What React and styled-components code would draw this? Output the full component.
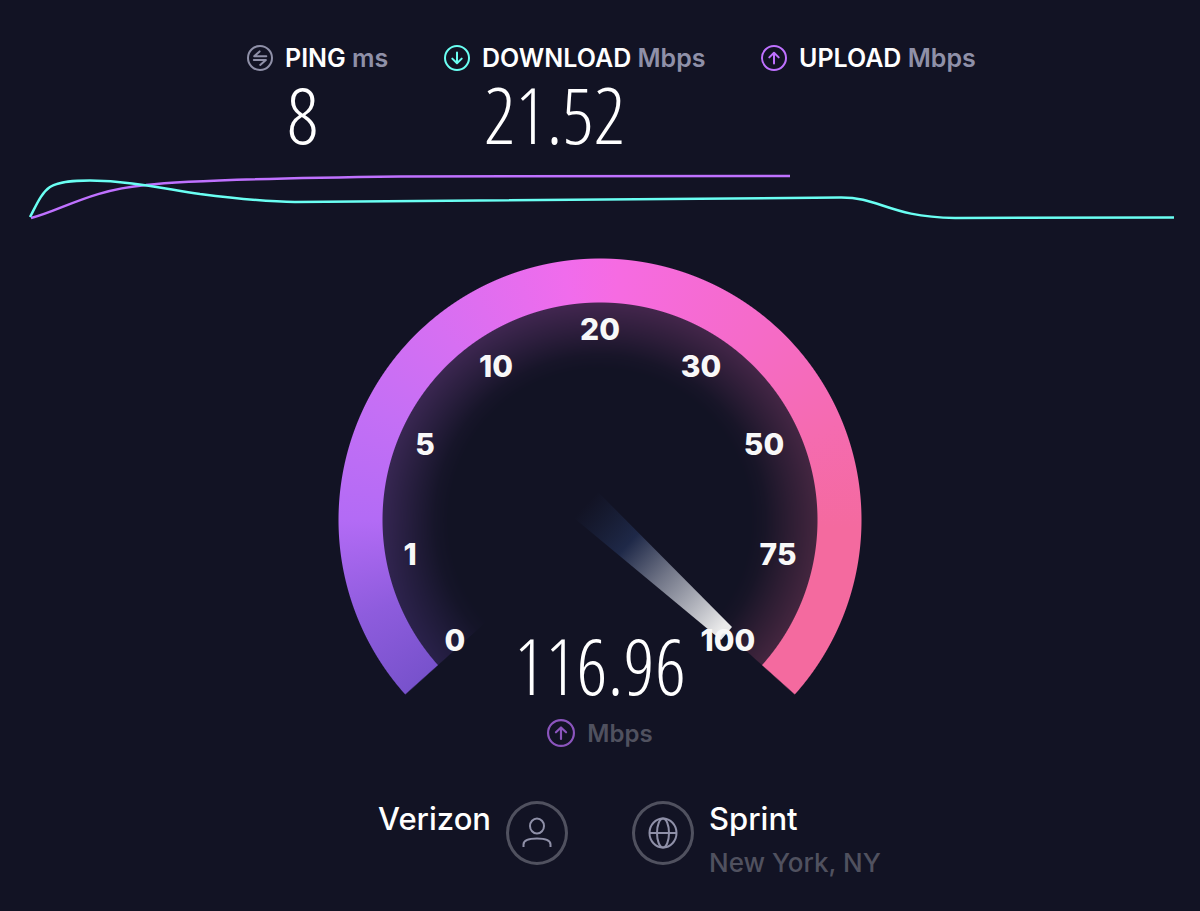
import React from "react";
import styled, { createGlobalStyle } from "styled-components";

const colors = {
  page: "#121324",
  text: "#ffffff",
  muted: "#8f90a8",
  dim: "#50515f",
  cyan: "#6afff3",
  purple: "#bf71ff",
};

const GlobalStyle = createGlobalStyle`
  body {
    margin: 0;
    background: ${colors.page};
    color: ${colors.text};
    font-family: Inter, "Liberation Sans", sans-serif;
  }
`;

const Page = styled.main`
  display: flex;
  flex-direction: column;
  min-height: 100vh;
  box-sizing: border-box;
  padding-top: 40px;
`;

const Results = styled.dl`
  display: grid;
  grid-template-columns: 197px 317px 212px;
  justify-content: center;
  margin: 0;
  padding-left: 20px;
`;

const Result = styled.div`
  display: flex;
  flex-direction: column;
`;

const ResultLabel = styled.dt`
  display: flex;
  align-items: center;
  gap: 12px;
  height: 36px;
  font-size: 25px;
  line-height: 36px;
  font-weight: 600;
  white-space: nowrap;
`;

const Unit = styled.span`
  color: ${colors.muted};
`;

const BigNumber = styled.span`
  font-family: "Open Sans Condensed Light", "Open Sans Cond Light", "Roboto Condensed Light", "Roboto Condensed", Roboto, sans-serif;
  font-size: 78px;
  line-height: 76px;
  font-weight: 300;
`;

const ResultValue = styled.dd`
  height: 76px;
  margin: 0;
  padding-left: 40px;
`;

const Chart = styled.svg`
  display: block;
  width: 100%;
  margin-top: 8px;
`;

const Gauge = styled.section`
  display: grid;
  grid-template-columns: 524px;
  grid-template-rows: 524px;
  justify-content: center;
  margin-top: 28px;

  & > * {
    grid-area: 1 / 1;
  }
`;

const Sweep = styled.div`
  background: conic-gradient(
    from 228deg,
    transparent 0deg,
    #7852cc 0.3deg,
    #8e5cdd 20deg,
    #b36bf5 42deg,
    #c46ff5 68deg,
    #d66ff2 92deg,
    #f06cec 124deg,
    #f66be2 136deg,
    #f56bc8 172deg,
    #f56bb0 200deg,
    #f46a9f 224deg,
    #f46a9f 263.7deg,
    transparent 264deg
  );
`;

const Ring = styled(Sweep)`
  mask-image: radial-gradient(circle, transparent 217px, #000 218px, #000 261px, transparent 262px);
`;

const Glow = styled(Sweep)`
  opacity: 0.22;
  mask-image: radial-gradient(
    circle,
    transparent 150px,
    rgba(0, 0, 0, 0.12) 165px,
    rgba(0, 0, 0, 0.55) 190px,
    #000 218px,
    transparent 219px
  );
`;

const Dial = styled.svg`
  display: block;
  z-index: 1;
  width: 100%;
  height: 100%;
`;

const Tick = styled.text`
  fill: #f8f8f8;
  font-size: 30px;
  font-weight: 800;
  text-anchor: middle;
`;

const Reading = styled.div`
  display: flex;
  flex-direction: column;
  align-items: center;
  align-self: end;
  z-index: 1;
  padding-bottom: 31px;
`;

const ReadingUnit = styled.div`
  display: flex;
  align-items: center;
  gap: 12px;
  margin-top: 12px;
  height: 36px;
  color: ${colors.dim};
  font-size: 24px;
  font-weight: 600;
`;

const Faded = styled.span`
  display: flex;
  opacity: 0.7;
`;

const Hosts = styled.footer`
  display: grid;
  grid-template-columns: 1fr 1fr;
  gap: 64px;
  margin-top: 19px;
`;

const Host = styled.div`
  display: flex;
  flex-direction: ${(p) => (p.$mirrored ? "row-reverse" : "row")};
  gap: 15px;
`;

const HostIcon = styled.span`
  display: flex;
  align-items: center;
  justify-content: center;
  box-sizing: border-box;
  width: 62px;
  height: 64px;
  border: 3px solid ${colors.dim};
  border-radius: 50%;
`;

const HostName = styled.div`
  font-size: 31px;
  line-height: 36px;
  font-weight: 500;
`;

const HostPlace = styled.div`
  margin-top: 8px;
  color: ${colors.dim};
  font-size: 26px;
  line-height: 36px;
  font-weight: 500;
`;

const IconSvg = styled.svg`
  flex: none;
  fill: none;
  stroke-width: 2px;
`;

const glyphs = {
  down: "M13 7.5V18M8.3 13.6L13 18.2L17.7 13.6",
  up: "M13 18.5V8M8.3 12.4L13 7.8L17.7 12.4",
  ping: "M19.3 11.2H7.2L12.6 6.4M6.8 15H18.9L13.2 19.9",
};

function RoundIcon({ kind, color, size = 26 }) {
  return (
    <IconSvg width={size} height={size} viewBox="0 0 26 26" stroke={color} aria-hidden="true">
      <circle cx="13" cy="13" r="12" />
      <path d={glyphs[kind]} strokeLinecap="round" strokeLinejoin="round" />
    </IconSvg>
  );
}

const results = [
  { kind: "ping", color: colors.muted, name: "PING", unit: "ms", value: "8" },
  { kind: "down", color: colors.cyan, name: "DOWNLOAD", unit: "Mbps", value: "21.52" },
  { kind: "up", color: colors.purple, name: "UPLOAD", unit: "Mbps", value: "" },
];

const ticks = [
  ["0", 117, 382],
  ["1", 72, 296],
  ["5", 87, 186],
  ["10", 158, 108],
  ["20", 262, 71],
  ["30", 363, 108],
  ["50", 426, 186],
  ["75", 440, 296],
  ["100", 390, 382],
];

export default function App() {
  return (
    <Page>
      <GlobalStyle />
      <Results>
        {results.map((r) => (
          <Result key={r.name}>
            <ResultLabel>
              <RoundIcon kind={r.kind} color={r.color} />
              <span>
                {r.name} <Unit>{r.unit}</Unit>
              </span>
            </ResultLabel>
            <ResultValue>
              <BigNumber>{r.value}</BigNumber>
            </ResultValue>
          </Result>
        ))}
      </Results>

      <Chart viewBox="0 160 1200 70" fill="none" strokeWidth="2.5" role="img" aria-label="Speed over time">
        <path
          d="M31 218C60 211 90 190 146 185C190 180 280 178 400 176.500C470 175.500 560 175.500 790 176"
          stroke={colors.purple}
        />
        <path
          d="M30 217C36 206 41 193 50 187C60 181 75 180.500 90 180.500C130 181 160 188 200 194C240 199 270 202 295 202L840 197.500C880 197 888 217 955 218L1174 217.500"
          stroke={colors.cyan}
        />
      </Chart>

      <Gauge>
        <Glow />
        <Ring />
        <Dial viewBox="0 0 524 524">
          <defs>
            <linearGradient id="needle" gradientUnits="userSpaceOnUse" x1="248" y1="246" x2="390" y2="377">
              <stop offset="0" stopColor="#1c2745" stopOpacity="0" />
              <stop offset="0.3" stopColor="#202b4c" stopOpacity="0.9" />
              <stop offset="0.55" stopColor="#7b8092" stopOpacity="0.9" />
              <stop offset="0.95" stopColor="#f0f0f0" stopOpacity="0.97" />
            </linearGradient>
          </defs>
          <path d="M260 234L394 369L383 382L236 260Z" fill="url(#needle)" />
          {ticks.map(([label, x, y]) => (
            <Tick key={label} x={x} y={y + 11}>
              {label}
            </Tick>
          ))}
        </Dial>
        <Reading>
          <BigNumber>116.96</BigNumber>
          <ReadingUnit>
            <Faded>
              <RoundIcon kind="up" color={colors.purple} size={28} />
            </Faded>
            Mbps
          </ReadingUnit>
        </Reading>
      </Gauge>

      <Hosts>
        <Host $mirrored>
          <HostIcon>
            <IconSvg width="30" height="32" viewBox="0 0 30 32" stroke={colors.muted} aria-hidden="true">
              <ellipse cx="15" cy="9" rx="7" ry="7.500" />
              <path d="M1.500 30V27.500C1.500 23 6 21.500 15 21.500S28.500 23 28.500 27.500V30" />
            </IconSvg>
          </HostIcon>
          <HostName>Verizon</HostName>
        </Host>
        <Host>
          <HostIcon>
            <IconSvg width="30" height="32" viewBox="0 0 30 32" stroke={colors.muted} aria-hidden="true">
              <ellipse cx="15" cy="16" rx="13.500" ry="14.500" />
              <ellipse cx="15" cy="16" rx="6" ry="14.500" />
              <path d="M1.500 16H28.500" />
            </IconSvg>
          </HostIcon>
          <div>
            <HostName>Sprint</HostName>
            <HostPlace>New York, NY</HostPlace>
          </div>
        </Host>
      </Hosts>
    </Page>
  );
}
